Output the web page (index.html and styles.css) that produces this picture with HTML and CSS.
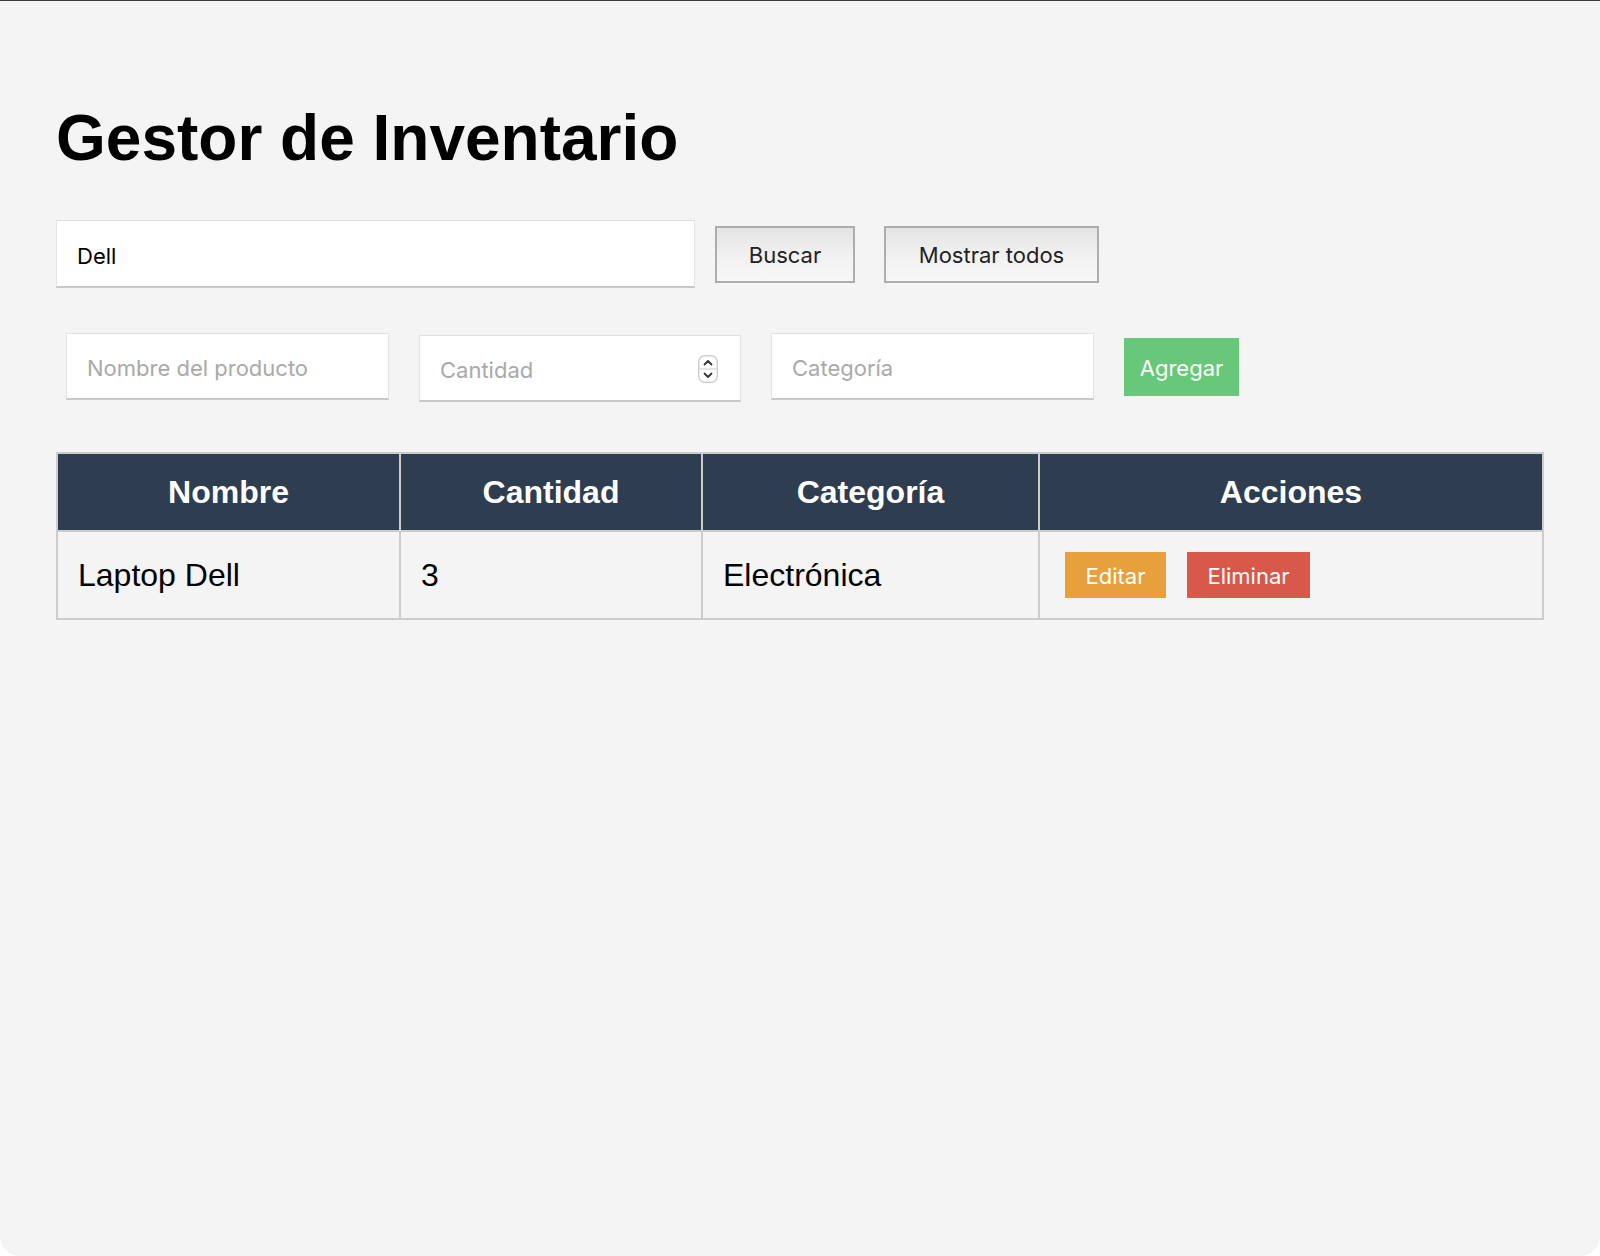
FILE: index.html
```html
<!DOCTYPE html>
<html lang="es">
<head>
<meta charset="utf-8">
<title>Gestor de Inventario</title>
<link rel="stylesheet" href="styles.css">
</head>
<body>
<div class="window">
  <h1 class="title">Gestor de Inventario</h1>

  <div class="search-row">
    <input class="field search-field" type="text" value="Dell">
    <button class="btn-gray btn-buscar">Buscar</button>
    <button class="btn-gray btn-todos">Mostrar todos</button>
  </div>

  <div class="add-row">
    <input class="field add-field" type="text" placeholder="Nombre del producto">
    <div class="num-wrap">
      <input class="field add-field" type="text" placeholder="Cantidad">
      <svg class="spinner" width="20" height="28" viewBox="0 0 20 28">
        <rect x="0.75" y="0.75" width="18.5" height="26.5" rx="6" fill="#fff" stroke="#cfcfcf" stroke-width="1.5"/>
        <line x1="1.5" y1="14" x2="18.5" y2="14" stroke="#d6d6d6" stroke-width="1.2"/>
        <path d="M6.5 9.5 L10 6 L13.5 9.5" fill="none" stroke="#333" stroke-width="1.8" stroke-linecap="round" stroke-linejoin="round"/>
        <path d="M6.5 18.5 L10 22 L13.5 18.5" fill="none" stroke="#333" stroke-width="1.8" stroke-linecap="round" stroke-linejoin="round"/>
      </svg>
    </div>
    <input class="field add-field" type="text" placeholder="Categoría">
    <button class="btn-add">Agregar</button>
  </div>

  <table class="inventory">
    <colgroup>
      <col class="c1"><col class="c2"><col class="c3"><col class="c4">
    </colgroup>
    <thead>
      <tr><th>Nombre</th><th>Cantidad</th><th>Categoría</th><th>Acciones</th></tr>
    </thead>
    <tbody>
      <tr>
        <td>Laptop Dell</td>
        <td>3</td>
        <td>Electrónica</td>
        <td>
          <div class="actions">
            <button class="btn-edit">Editar</button>
            <button class="btn-delete">Eliminar</button>
          </div>
        </td>
      </tr>
    </tbody>
  </table>
</div>
</body>
</html>
```

FILE: styles.css
```css
html {
  background: #ffffff;
}

body {
  margin: 0;
}

.window {
  box-sizing: border-box;
  height: 1256px;
  background: #f4f4f4;
  border-top: 1px solid #3a3a3a;
  border-radius: 0 0 20px 20px;
  padding: 0 57px 0 56px;
  overflow: hidden;
  font-family: "Liberation Sans", Helvetica, Arial, sans-serif;
}

.title {
  margin: 100px 0 45px 0;
  font-size: 64px;
  line-height: 74px;
  font-weight: bold;
  color: #000;
}

.field {
  box-sizing: border-box;
  height: 67px;
  padding: 4px 20px 0 20px;
  background: #fff;
  border-style: solid;
  border-width: 1px 1px 2px 1px;
  border-color: #e1e1e1 #e4e4e4 #c8c8c8 #e4e4e4;
  border-radius: 0;
  font-family: Inter, "Noto Sans", sans-serif;
  font-size: 22px;
  color: #000;
  outline: none;
}

.field::placeholder {
  color: #a9a9a9;
}

.search-row {
  display: flex;
  align-items: center;
}

.search-field {
  width: 639px;
  height: 68px;
}

.btn-gray {
  box-sizing: border-box;
  height: 57px;
  border: 2px solid #adadad;
  background: linear-gradient(to bottom, #e3e3e3 0%, #f2f2f2 55%, #f7f7f7 100%);
  font-family: Inter, "Noto Sans", sans-serif;
  font-size: 22px;
  color: #222;
  padding: 2px 0 0 0;
}

.btn-buscar {
  width: 140px;
  margin-left: 20px;
}

.btn-todos {
  width: 215px;
  margin-left: 29px;
}

.add-row {
  display: flex;
  align-items: flex-start;
  margin-top: 45px;
  padding-left: 10px;
}

.add-field {
  width: 323px;
  margin-right: 30px;
}

.num-wrap {
  position: relative;
  margin-top: 2px;
  margin-right: 30px;
}

.num-wrap .add-field {
  width: 322px;
  margin-right: 0;
}

.spinner {
  position: absolute;
  right: 23px;
  top: 20px;
}

.btn-add {
  box-sizing: border-box;
  margin-top: 5px;
  width: 115px;
  height: 58px;
  border: none;
  background: #67c87a;
  color: #fff;
  font-family: Inter, "Noto Sans", sans-serif;
  font-size: 22px;
  padding: 2px 0 0 0;
}

.inventory {
  margin-top: 50px;
  width: 1486px;
  border-collapse: collapse;
  table-layout: fixed;
  border: 2px solid #cccccc;
}

.c1 { width: 343px; }
.c2 { width: 302px; }
.c3 { width: 337px; }
.c4 { width: 504px; }

.inventory th {
  background: #2e3d50;
  color: #fff;
  font-size: 32px;
  font-weight: bold;
  line-height: 37px;
  padding: 20px 20px 19px 20px;
  text-align: center;
  border: 2px solid #cccccc;
}

.inventory td {
  font-size: 32px;
  line-height: 37px;
  color: #000;
  padding: 20px;
  text-align: left;
  border: 2px solid #cccccc;
  vertical-align: middle;
}

.actions {
  display: flex;
  gap: 21px;
  padding-left: 5px;
}

.btn-edit,
.btn-delete {
  box-sizing: border-box;
  height: 46px;
  border: none;
  padding: 2px 0 0 0;
  color: #fff;
  font-family: Inter, "Noto Sans", sans-serif;
  font-size: 22px;
}

.btn-edit {
  background: #e8a03d;
  width: 101px;
}

.btn-delete {
  background: #d8584a;
  width: 123px;
}
```
